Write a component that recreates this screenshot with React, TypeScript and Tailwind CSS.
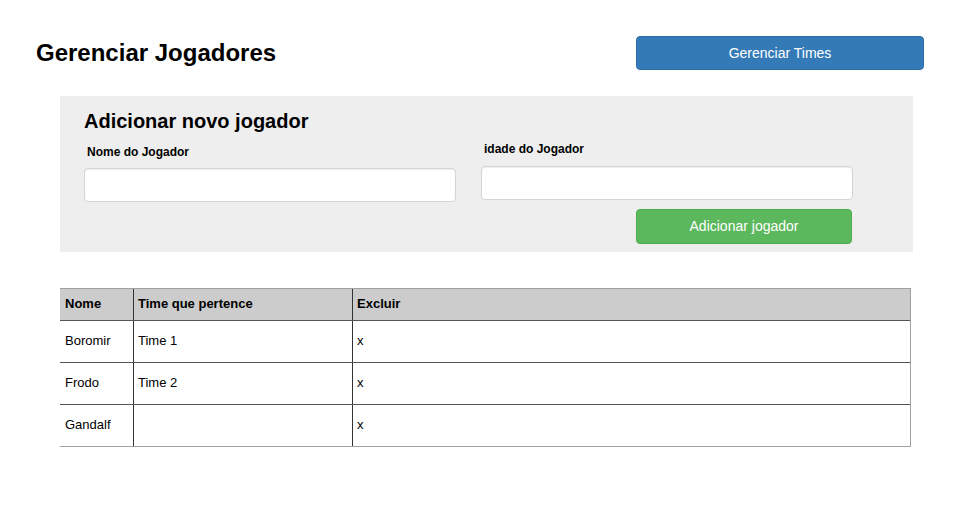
import React from "react";

const rows = [
  { nome: "Boromir", time: "Time 1" },
  { nome: "Frodo", time: "Time 2" },
  { nome: "Gandalf", time: "" },
];

export default function App() {
  return (
    <div
      className="w-[960px] h-[506px] bg-white text-black overflow-hidden"
      style={{ fontFamily: '"Liberation Sans", Arial, sans-serif' }}
    >
      <div className="flex items-center justify-between pt-[36px] px-[36px]">
        <h1 className="text-[24px] font-bold leading-[28px]">Gerenciar Jogadores</h1>
        <button className="w-[288px] h-[34px] rounded-[4px] bg-[#337ab7] border border-[#2e6da4] text-white text-[14px]">
          Gerenciar Times
        </button>
      </div>

      <div className="mt-[26px] ml-[60px] w-[853px] h-[156px] bg-[#eeeeee] pt-[14px] pl-[24px]">
        <h2 className="text-[20px] font-bold leading-[23px]">Adicionar novo jogador</h2>
        <div className="flex gap-[25px]">
          <div className="w-[372px] flex flex-col">
            <label className="mt-[12px] ml-[3px] text-[12px] font-bold leading-[14px]">Nome do Jogador</label>
            <input className="mt-[9px] h-[34px] w-full bg-white rounded-[4px] border border-[#d4d4d4] shadow-[inset_0_1px_1px_rgba(0,0,0,0.075)] outline-none" />
          </div>
          <div className="w-[372px] flex flex-col">
            <label className="mt-[9px] ml-[3px] text-[12px] font-bold leading-[14px]">idade do Jogador</label>
            <input className="mt-[10px] h-[34px] w-full bg-white rounded-[4px] border border-[#d4d4d4] shadow-[inset_0_1px_1px_rgba(0,0,0,0.075)] outline-none" />
            <button className="mt-[9px] self-end mr-[1px] w-[216px] h-[35px] rounded-[4px] bg-[#5cb85c] border border-[#4cae4c] text-white text-[14px]">
              Adicionar jogador
            </button>
          </div>
        </div>
      </div>

      <div className="mt-[36px] ml-[60px] w-[851px] text-[13px] border-t border-r border-[#a0a0a0]">
        <div className="flex h-[32px] bg-[#cccccc] font-bold border-b border-[#555555]">
          <div className="w-[73px] pl-[5px] pb-[2px] flex items-center">Nome</div>
          <div className="w-[219px] pl-[4px] pb-[2px] flex items-center border-l border-[#333333]">Time que pertence</div>
          <div className="flex-1 pl-[4px] pb-[2px] flex items-center border-l border-[#333333]">Excluir</div>
        </div>
        {rows.map((r, i) => (
          <div
            key={r.nome}
            className={
              i === rows.length - 1
                ? "flex h-[42px] border-b border-[#a0a0a0]"
                : "flex h-[42px] border-b border-[#555555]"
            }
          >
            <div className="w-[73px] pl-[5px] pb-[2px] flex items-center">{r.nome}</div>
            <div className="w-[219px] pl-[4px] pb-[2px] flex items-center border-l border-[#333333]">{r.time}</div>
            <div className="flex-1 pl-[4px] pb-[2px] flex items-center border-l border-[#333333]">x</div>
          </div>
        ))}
      </div>
    </div>
  );
}
